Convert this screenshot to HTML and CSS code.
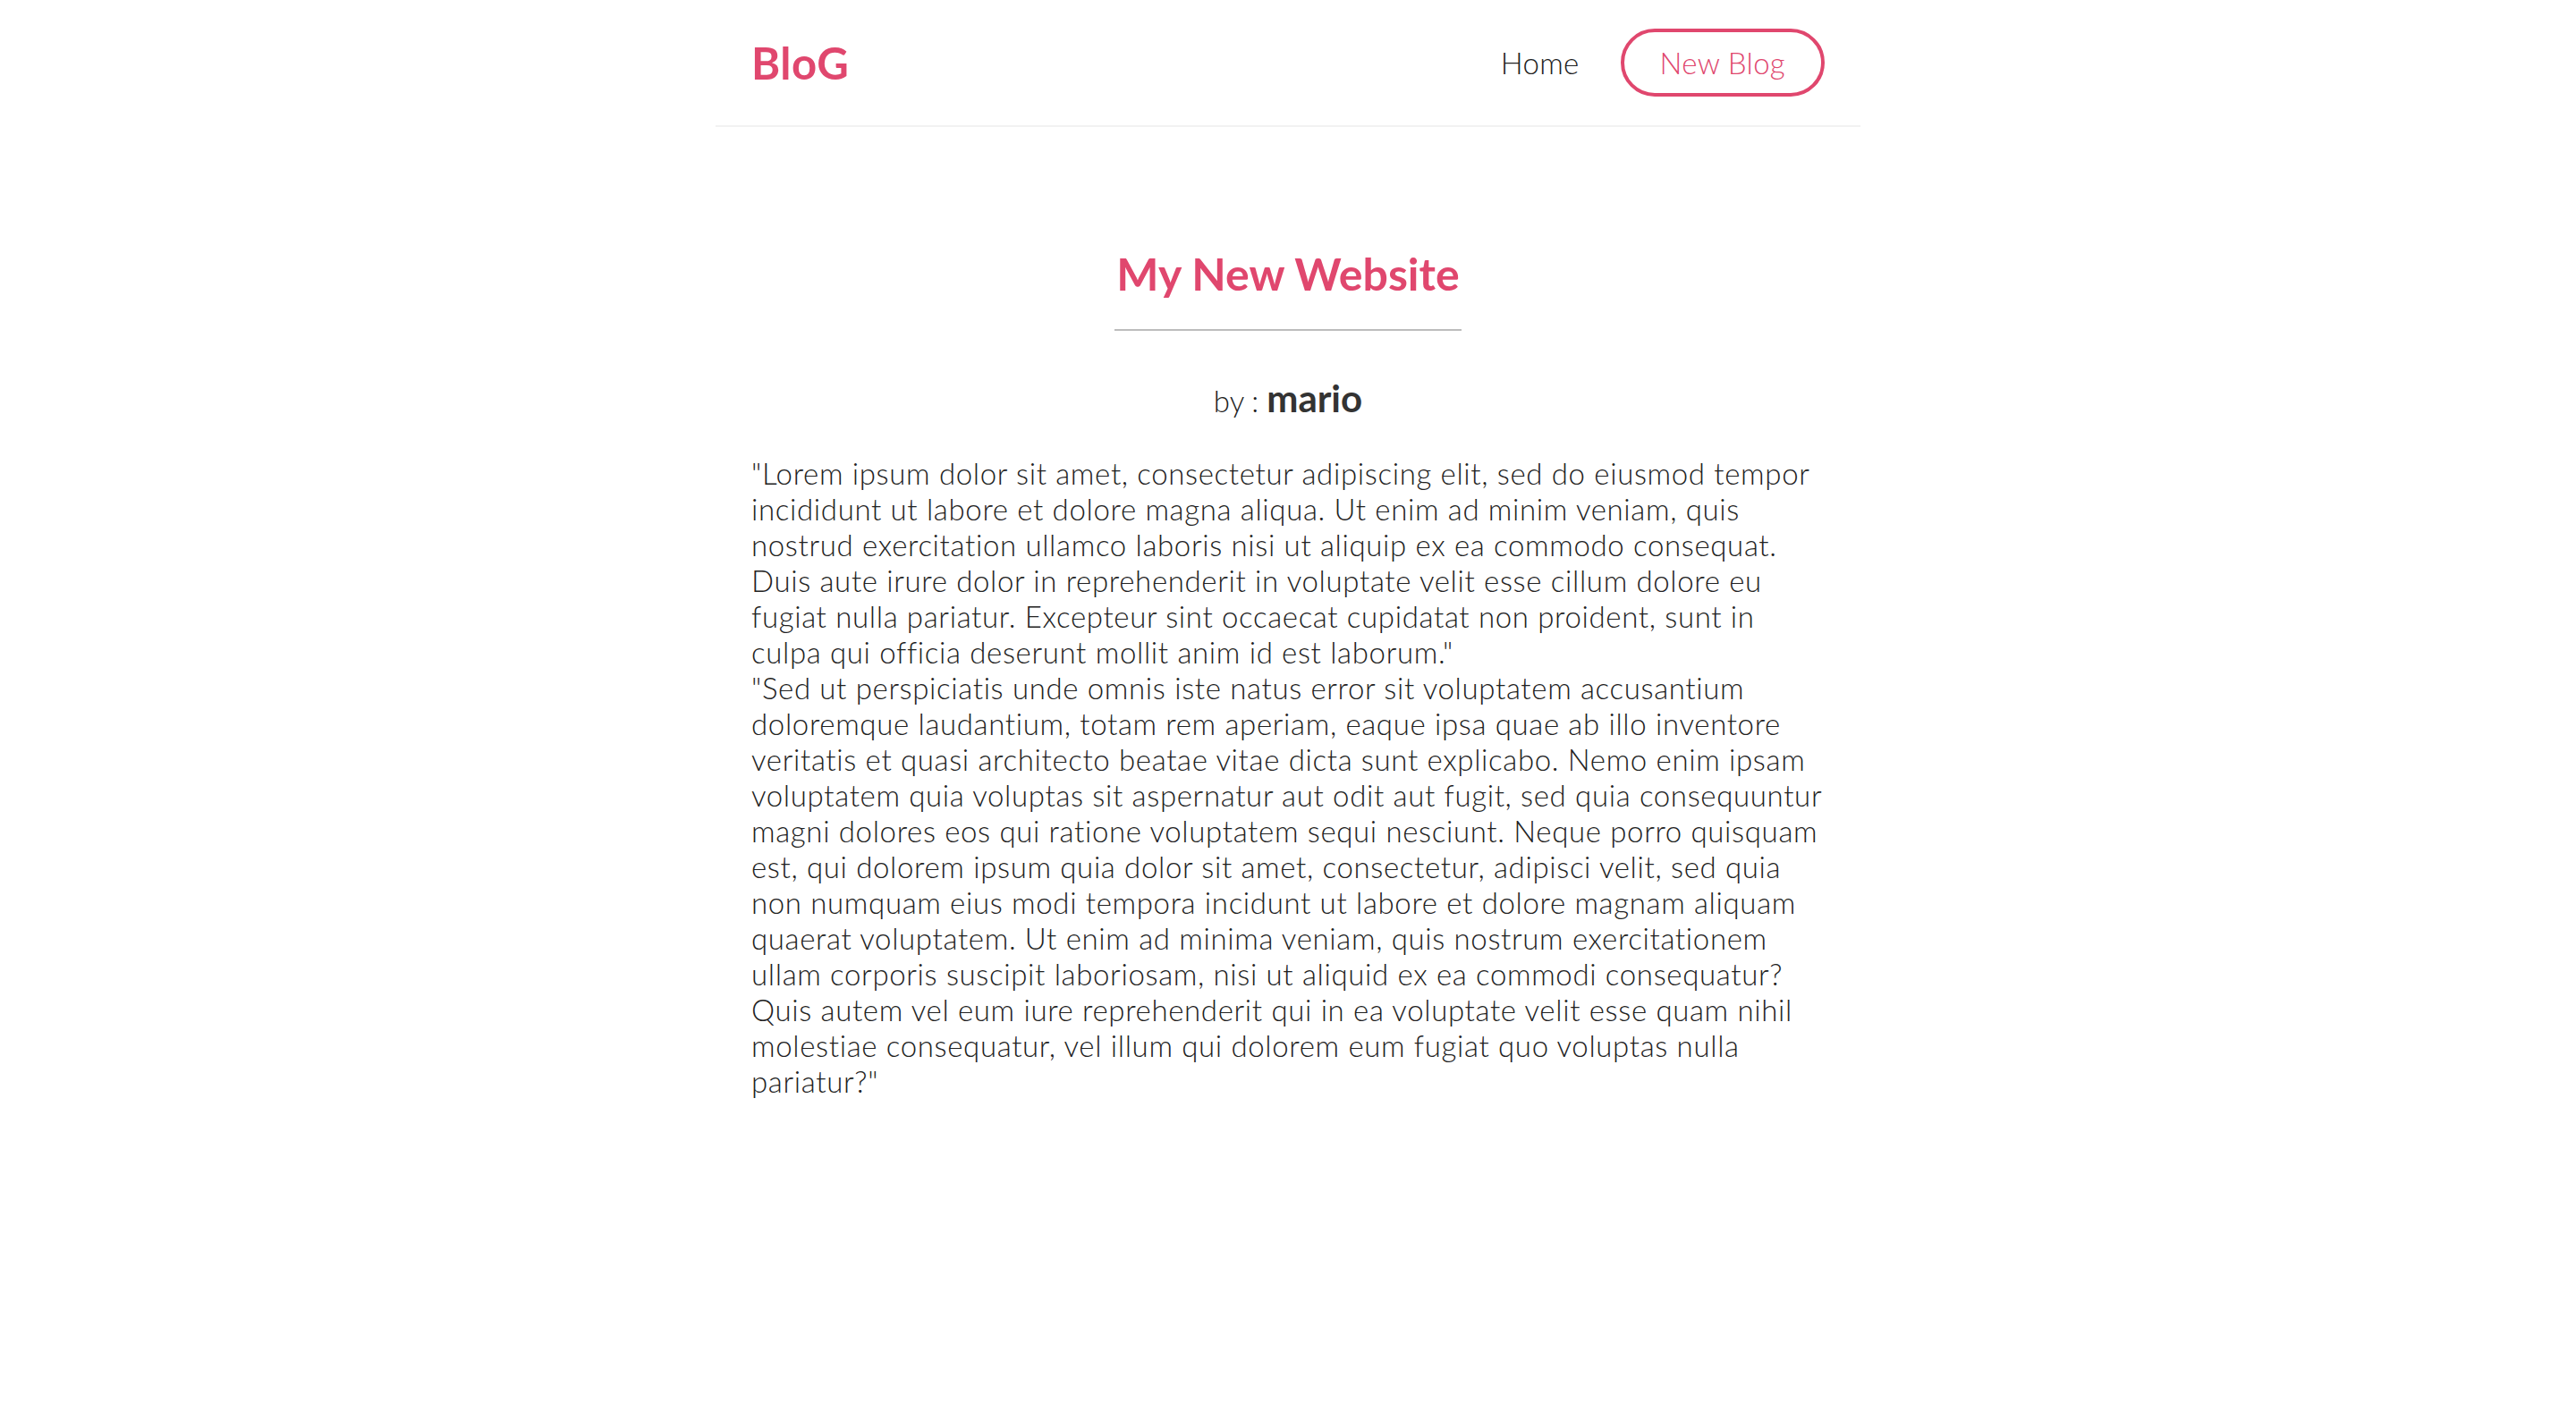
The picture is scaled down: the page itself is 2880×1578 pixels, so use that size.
FILE: index.html
```html
<!DOCTYPE html>
<html lang="en">
<head>
<meta charset="utf-8">
<title>BloG</title>
<link rel="stylesheet" href="styles.css">
</head>
<body>
<nav class="navbar">
  <h1 class="brand">BloG</h1>
  <div class="links">
    <a class="link" href="#">Home</a>
    <a class="link link-button" href="#">New Blog</a>
  </div>
</nav>
<main class="content">
  <article class="blog-details">
    <div class="title-wrap">
      <h2 class="title">My New Website</h2>
    </div>
    <div class="byline">by : <span class="author">mario</span></div>
    <div class="body">
      <p class="para">"Lorem ipsum dolor sit amet, consectetur adipiscing elit, sed do eiusmod tempor<br>incididunt ut labore et dolore magna aliqua. Ut enim ad minim veniam, quis<br>nostrud exercitation ullamco laboris nisi ut aliquip ex ea commodo consequat.<br>Duis aute irure dolor in reprehenderit in voluptate velit esse cillum dolore eu<br>fugiat nulla pariatur. Excepteur sint occaecat cupidatat non proident, sunt in<br>culpa qui officia deserunt mollit anim id est laborum."</p>
      <p class="para">"Sed ut perspiciatis unde omnis iste natus error sit voluptatem accusantium<br>doloremque laudantium, totam rem aperiam, eaque ipsa quae ab illo inventore<br>veritatis et quasi architecto beatae vitae dicta sunt explicabo. Nemo enim ipsam<br>voluptatem quia voluptas sit aspernatur aut odit aut fugit, sed quia consequuntur<br>magni dolores eos qui ratione voluptatem sequi nesciunt. Neque porro quisquam<br>est, qui dolorem ipsum quia dolor sit amet, consectetur, adipisci velit, sed quia<br>non numquam eius modi tempora incidunt ut labore et dolore magnam aliquam<br>quaerat voluptatem. Ut enim ad minima veniam, quis nostrum exercitationem<br>ullam corporis suscipit laboriosam, nisi ut aliquid ex ea commodi consequatur?<br>Quis autem vel eum iure reprehenderit qui in ea voluptate velit esse quam nihil<br>molestiae consequatur, vel illum qui dolorem eum fugiat quo voluptas nulla<br>pariatur?"</p>
    </div>
  </article>
</main>
</body>
</html>
```
FILE: styles.css
```css
* {
  margin: 0;
  box-sizing: border-box;
}

body {
  margin: 0;
  background: #ffffff;
  color: #333333;
  font-family: "Lato", "Open Sans", "Liberation Sans", sans-serif;
}

.navbar {
  width: 1280px;
  margin: 0 auto;
  padding: 32px 40px;
  display: flex;
  align-items: center;
  border-bottom: 2px solid #f2f2f2;
  height: 142px;
}

.brand {
  font-size: 49px;
  line-height: 60px;
  font-weight: 700;
  color: #e0476e;
  letter-spacing: 0.5px;
}

.links {
  margin-left: auto;
  display: flex;
  align-items: center;
}

.link {
  font-size: 33px;
  line-height: 40px;
  font-weight: 300;
  color: #222222;
  text-decoration: none;
  padding: 12px;
  letter-spacing: 0.3px;
}

.link-button {
  margin-left: 34px;
  padding: 14px 40px;
  border: 4px solid #e0476e;
  border-radius: 999px;
  color: #e0476e;
}

.content {
  width: 1280px;
  margin: 0 auto;
  padding: 0 40px;
}

.title-wrap {
  text-align: center;
  margin-top: 134px;
}

.title {
  display: inline-block;
  font-size: 50px;
  line-height: 60px;
  font-weight: 700;
  color: #e0476e;
  padding: 0 2px 32px;
  border-bottom: 2px solid #bdbdbd;
}

.byline {
  margin-top: 50px;
  text-align: center;
  font-size: 33px;
  line-height: 50px;
  font-weight: 300;
  color: #222222;
}

.author {
  font-size: 42px;
  font-weight: 700;
  color: #333333;
}

.body {
  margin-top: 36px;
}

.para {
  font-size: 33px;
  line-height: 40px;
  font-weight: 300;
  letter-spacing: 0.65px;
  white-space: nowrap;
  color: #222222;
}
```
